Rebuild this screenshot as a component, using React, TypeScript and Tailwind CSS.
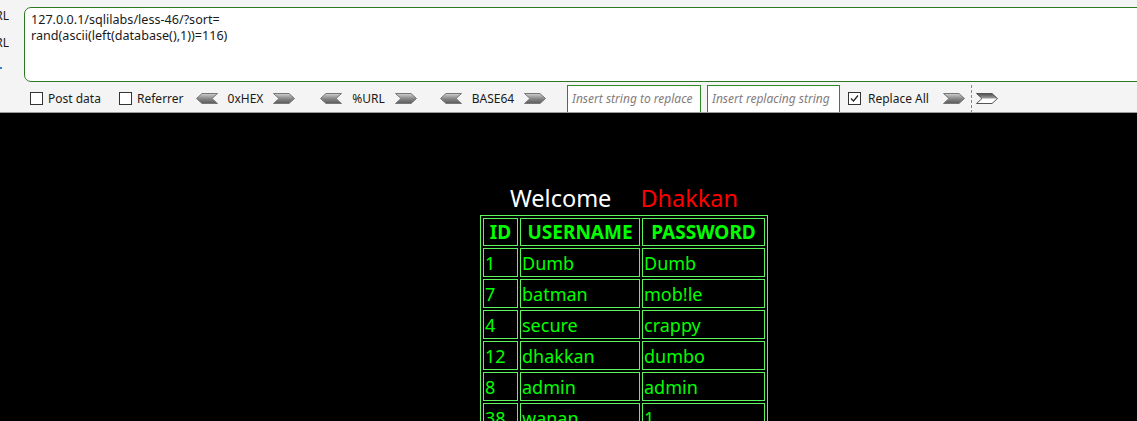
import React from "react"

const ui = { fontFamily: '"Noto Sans", "Liberation Sans", sans-serif' }

function Arrow({ dir, hollow }: { dir: "left" | "right"; hollow?: boolean }) {
  const pts =
    dir === "left"
      ? "0.5,5.5 6,0.5 21.5,0.5 16,5.5 21.5,10.5 6,10.5"
      : "0.5,0.5 16,0.5 21.5,5.5 16,10.5 0.5,10.5 6,5.5"
  const id = hollow ? "gh" : dir === "left" ? "gl" : "gr"
  return (
    <svg width="22" height="11" viewBox="0 0 22 11" className="shrink-0">
      <defs>
        <linearGradient id={id} x1="0" y1="0" x2="0" y2="1">
          {hollow ? (
            <>
              <stop offset="0" stopColor="#4a4a4a" />
              <stop offset="0.45" stopColor="#9a9a9a" />
              <stop offset="0.55" stopColor="#ffffff" />
              <stop offset="1" stopColor="#ffffff" />
            </>
          ) : (
            <>
              <stop offset="0" stopColor="#d0d0d0" />
              <stop offset="0.5" stopColor="#8a8a8a" />
              <stop offset="1" stopColor="#5a5a5a" />
            </>
          )}
        </linearGradient>
      </defs>
      <polygon points={pts} fill={`url(#${id})`} stroke={hollow ? "#555" : "#777"} strokeWidth="1" />
    </svg>
  )
}

function Box({ checked }: { checked?: boolean }) {
  return (
    <div className="flex h-[13px] w-[13px] shrink-0 items-center justify-center border border-[#333] bg-white">
      {checked && (
        <svg width="9" height="9" viewBox="0 0 9 9">
          <path d="M1 4.5 L3.5 7 L8 1.5" fill="none" stroke="#222" strokeWidth="1.2" />
        </svg>
      )}
    </div>
  )
}

const rows: [string, string, string][] = [
  ["1", "Dumb", "Dumb"],
  ["7", "batman", "mob!le"],
  ["4", "secure", "crappy"],
  ["12", "dhakkan", "dumbo"],
  ["8", "admin", "admin"],
  ["38", "wanan", "1"],
  ["2", "Angelina", "I-kill-you"],
  ["3", "Dummy", "p@ssword"],
]

export default function App() {
  return (
    <div className="h-[421px] w-[1137px] overflow-hidden bg-black">
      {/* hackbar */}
      <div className="flex h-[113px] border-b border-[#9a9a9a] bg-[#f4f4f4] text-[12px] text-[#1a1a1a]" style={ui}>
        <div className="flex w-[24px] shrink-0 flex-col">
          <div className="mt-[8px] flex h-[16px] w-[9px] justify-end overflow-hidden leading-[16px]">
            <span className="whitespace-nowrap">URL</span>
          </div>
          <div className="mt-[11px] flex h-[16px] w-[9px] justify-end overflow-hidden leading-[16px]">
            <span className="whitespace-nowrap">URL</span>
          </div>
          <div className="ml-0 mt-[16px] h-[2px] w-[2px] bg-[#2a7fd4]" />
        </div>
        <div className="flex min-w-0 flex-1 flex-col overflow-hidden">
          <div className="mt-[7px] h-[75px] w-[1125px] shrink-0 rounded-l-[7px] border border-[#2b7a22] bg-white px-[6px] pt-[4px] text-[12.6px] leading-[16px]">
            127.0.0.1/sqlilabs/less-46/?sort=
            <br />
            rand(ascii(left(database(),1))=116)
          </div>
          <div className="mt-[2px] flex h-[29px] shrink-0 items-center whitespace-nowrap">
            <div className="ml-[6px]"><Box /></div>
            <span className="ml-[5px] w-[71px]">Post data</span>
            <Box />
            <span className="ml-[5px] w-[59px]">Referrer</span>
            <Arrow dir="left" />
            <span className="w-[55px] text-center">0xHEX</span>
            <Arrow dir="right" />
            <div className="ml-[25px]"><Arrow dir="left" /></div>
            <span className="w-[53px] text-center">%URL</span>
            <Arrow dir="right" />
            <div className="ml-[23px]"><Arrow dir="left" /></div>
            <span className="w-[62px] text-center">BASE64</span>
            <Arrow dir="right" />
            <div className="ml-[21px] flex h-[28px] w-[134px] items-center overflow-hidden border border-[#2b8a22] bg-white px-[4px] italic text-[#857b7b]">
              Insert string to replace
            </div>
            <div className="ml-[6px] flex h-[28px] w-[133px] items-center overflow-hidden border border-[#2b8a22] bg-white px-[4px] italic text-[#857b7b]">
              Insert replacing string
            </div>
            <div className="ml-[8px]"><Box checked /></div>
            <span className="ml-[7px] w-[75px]">Replace All</span>
            <Arrow dir="right" />
            <div className="ml-[6px] h-[28px] border-l border-dashed border-[#888]" />
            <div className="ml-[4px]"><Arrow dir="right" hollow /></div>
          </div>
        </div>
      </div>

      {/* page */}
      <div className="flex justify-center pl-[111px]" style={{ fontFamily: '"Noto Sans", "Open Sans", sans-serif' }}>
        <div className="flex flex-col items-center">
          <div className="mt-[70px] flex h-[30px] items-center text-[23.5px] leading-[30px]">
            <span className="text-white">Welcome</span>
            <span className="ml-[29px] text-[#ff0000]">Dhakkan</span>
          </div>
          <table className="mt-[2px] border-separate border-spacing-[2px] border border-[#5cf55c] text-[#00ff00]">
            <thead>
              <tr>
                <th className="h-[28px] w-[35px] border border-[#5cf55c] p-0 text-[19px] font-bold leading-none">ID</th>
                <th className="h-[28px] w-[120px] border border-[#5cf55c] p-0 text-[19px] font-bold leading-none">USERNAME</th>
                <th className="h-[28px] w-[123px] border border-[#5cf55c] p-0 text-[19px] font-bold leading-none">PASSWORD</th>
              </tr>
            </thead>
            <tbody>
              {rows.map((r, i) => (
                <tr key={i}>
                  {r.map((c, j) => (
                    <td key={j} className="h-[29px] border border-[#5cf55c] pb-0 pt-[1px] pl-[1px] pr-0 text-[18px] leading-none">
                      {c}
                    </td>
                  ))}
                </tr>
              ))}
            </tbody>
          </table>
        </div>
      </div>
    </div>
  )
}
